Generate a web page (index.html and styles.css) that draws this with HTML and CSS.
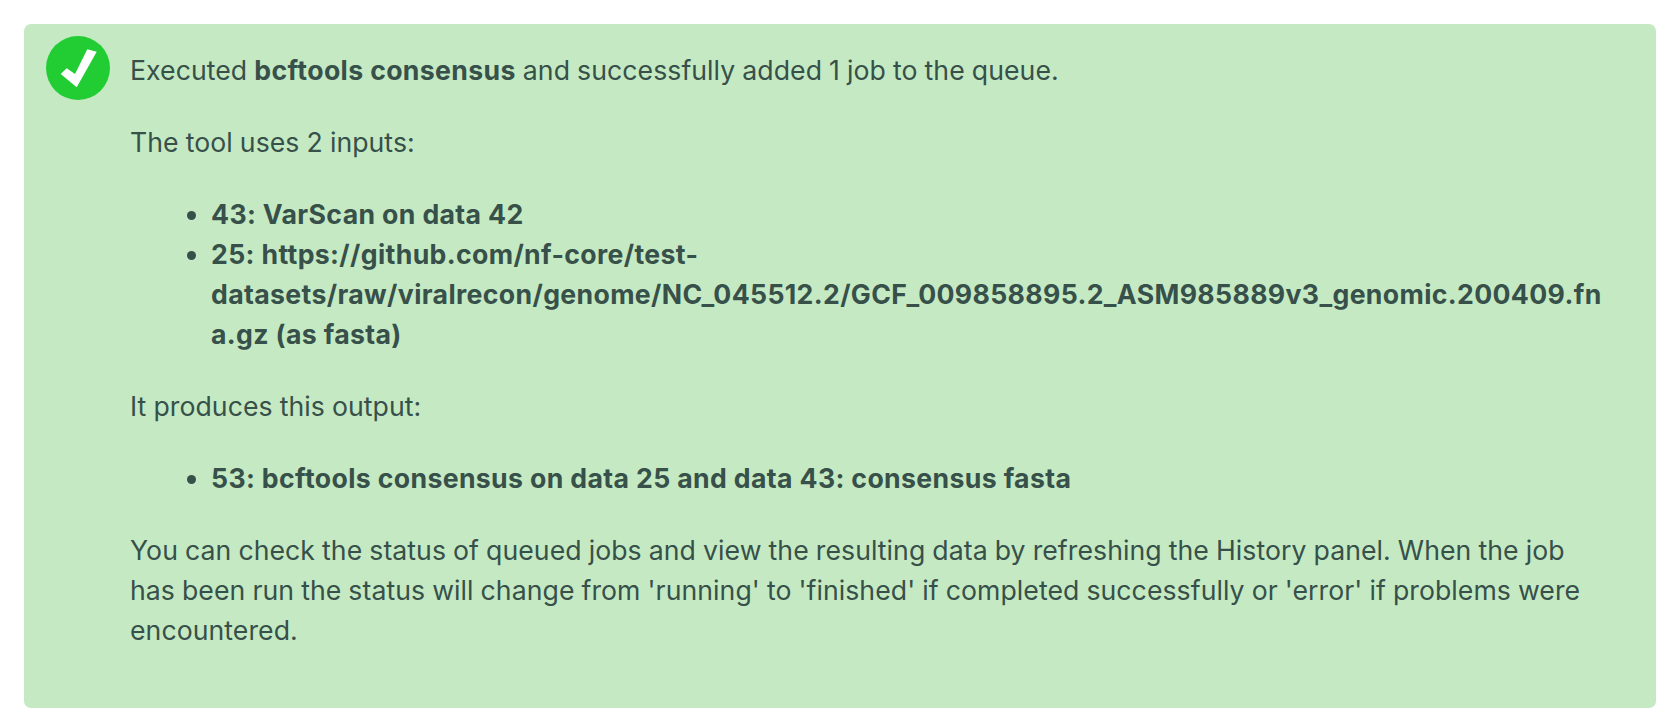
FILE: index.html
```html
<!DOCTYPE html>
<html lang="en">
<head>
<meta charset="utf-8">
<title>Tool executed</title>
<link rel="stylesheet" href="styles.css">
</head>
<body>
<div class="message">
  <svg class="check" viewBox="0 0 64 64" aria-hidden="true">
    <circle cx="32" cy="32" r="32" fill="#22cc33"/>
    <path d="M14.7 38L30.7 51.3 50.7 15.7 41.3 13.3 29 38 20.7 32.300z" fill="#fff"/>
  </svg>
  <div class="body">
    <p>Executed <b>bcftools consensus</b> and successfully added 1 job to the queue.</p>
    <p>The tool uses 2 inputs:</p>
    <ul>
      <li><b>43: VarScan on data 42</b></li>
      <li><b>25: https://github.com/nf-core/test-datasets/raw/viralrecon/genome/NC_045512.2/GCF_009858895.2_ASM985889v3_genomic.200409.fna.gz (as fasta)</b></li>
    </ul>
    <p>It produces this output:</p>
    <ul>
      <li><b>53: bcftools consensus on data 25 and data 43: consensus fasta</b></li>
    </ul>
    <p>You can check the status of queued jobs and view the resulting data by refreshing the History panel. When the job has been run the status will change from 'running' to 'finished' if completed successfully or 'error' if problems were encountered.</p>
  </div>
</div>
</body>
</html>
```
FILE: styles.css
```css
html, body { margin: 0; background: #fff; }
body { padding: 24px 16px 0 24px; }
.message {
  display: flex;
  box-sizing: border-box;
  height: 684px;
  background: #c5eac3;
  border-radius: 7px;
  padding: 12px 48px 0 22px;
  color: #37504a;
  font: 400 26.67px/40px Inter, "Noto Sans", sans-serif;
  letter-spacing: 0.05px;
  word-spacing: -0.5px;
}
.check { flex: none; margin-right: 20px; width: 64px; height: 64px; }
.body { flex: 1; min-width: 0; padding-top: 14px; }
p { margin: 0 0 32px; }
ul { margin: 0 0 32px; padding-left: 81px; }
li { overflow-wrap: anywhere; }
b { font-weight: 700; letter-spacing: 0.35px; word-spacing: 0; }
```
